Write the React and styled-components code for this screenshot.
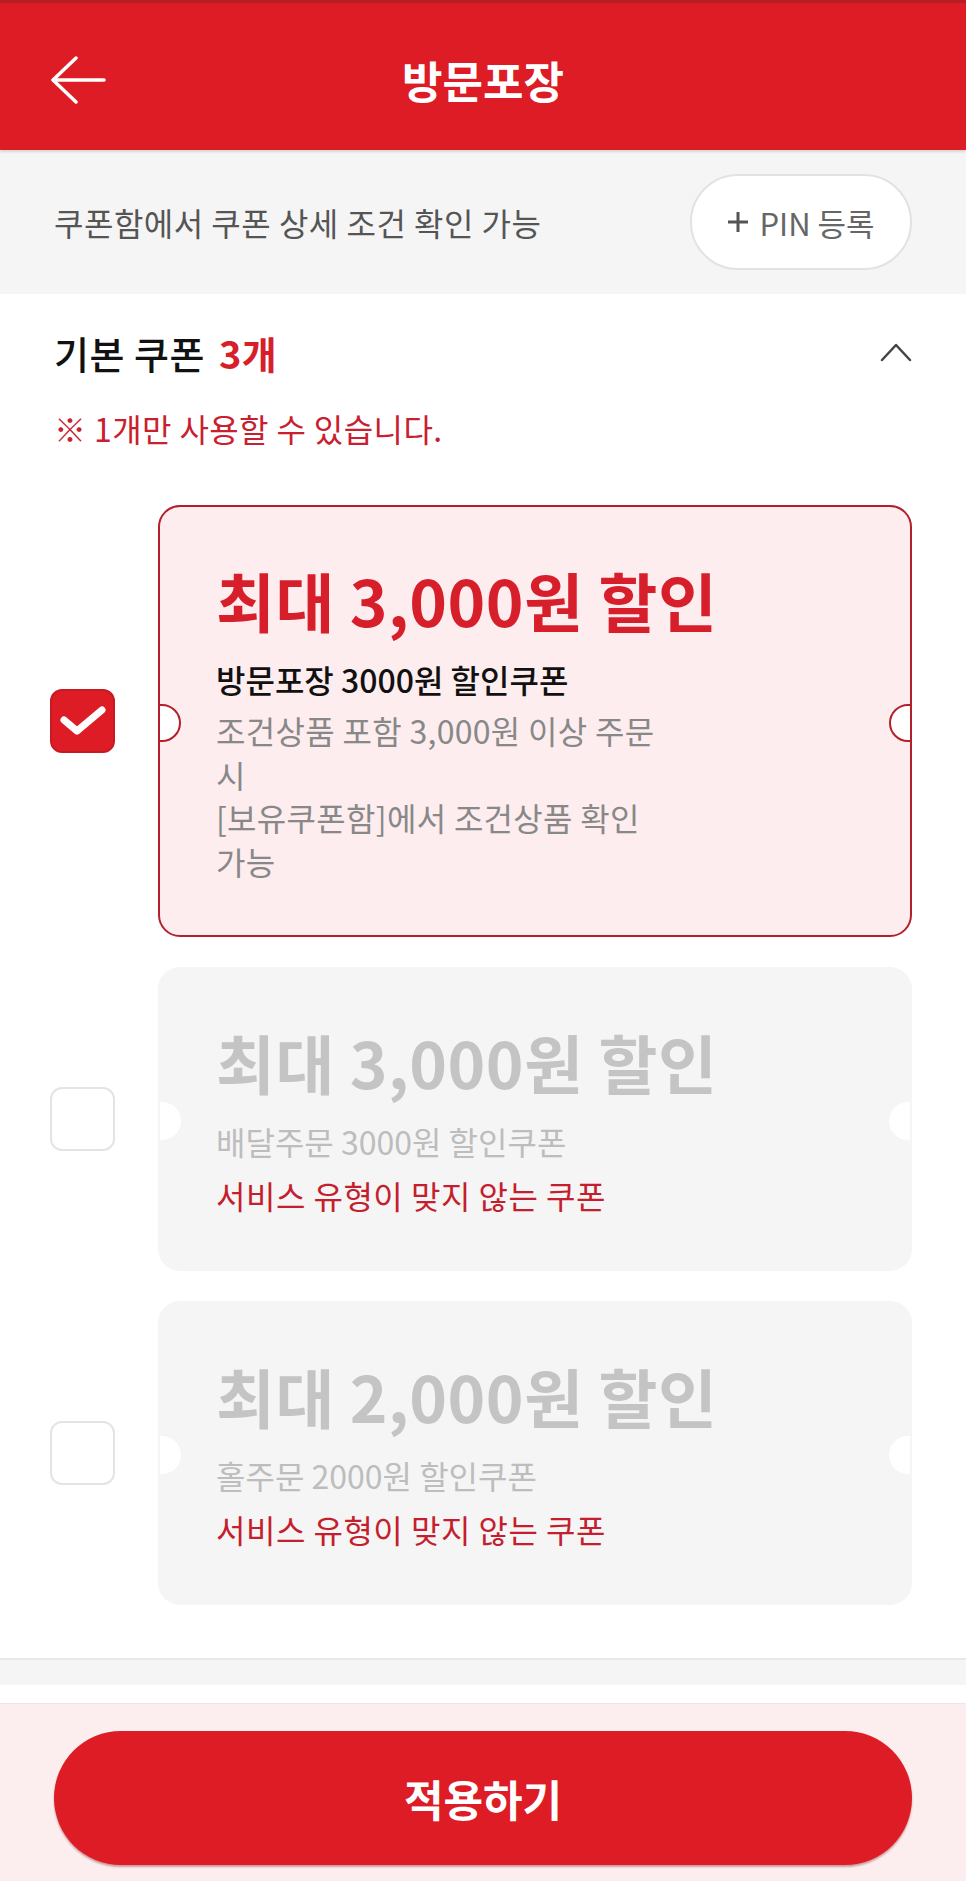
import React from 'react'
import styled, { createGlobalStyle, css } from 'styled-components'

const GlobalStyle = createGlobalStyle`
    * {
        box-sizing: border-box;
    }
    body {
        margin: 0;
        background: #ffffff;
        font-family: "Noto Sans CJK KR", "Noto Sans", sans-serif;
        color: #111;
    }
`

const Page = styled.div`
    width: 966px;
    display: flex;
    flex-direction: column;
`

const Header = styled.header`
    height: 150px;
    border-top: 3px solid #b81c25;
    padding: 6px 50px 0;
    background: #dd1c26;
    display: grid;
    grid-template-columns: 1fr auto 1fr;
    align-items: center;
    box-shadow: 0 2px 2px rgba(0, 0, 0, 0.12);
    position: relative;
    z-index: 1;
`

const BackButton = styled.button`
    width: 56px;
    height: 48px;
    padding: 0;
    border: none;
    background: transparent;
    display: flex;
    align-items: center;
    cursor: pointer;
`

const Title = styled.h1`
    margin: 0;
    font-size: 44px;
    font-weight: 700;
    color: #fff;
`

const InfoBar = styled.div`
    height: 144px;
    padding: 0 54px;
    background: #f5f5f5;
    display: flex;
    align-items: center;
    justify-content: space-between;
`

const InfoText = styled.p`
    margin: 0;
    font-size: 32px;
    color: #555;
    letter-spacing: 0.5px;
`

const PinButton = styled.button`
    width: 222px;
    height: 96px;
    border: 2px solid #e2e2e2;
    border-radius: 48px;
    background: #fff;
    display: flex;
    align-items: center;
    justify-content: center;
    gap: 10px;
    font-family: inherit;
    font-size: 31px;
    color: #666;
    cursor: pointer;
`

const Section = styled.section`
    padding: 28px 54px 53px 50px;
`

const SectionHead = styled.div`
    height: 60px;
    padding-left: 4px;
    display: flex;
    align-items: center;
    justify-content: space-between;
`

const SectionTitle = styled.h2`
    margin: 0;
    font-size: 38px;
    font-weight: 500;
    color: #111;
    letter-spacing: 0.5px;
`

const Count = styled.span`
    margin-left: 14px;
    color: #d71f2b;
    font-weight: 700;
`

const Note = styled.p`
    margin: 26px 0 0 4px;
    line-height: 40px;
    font-size: 32px;
    color: #c8202e;
    letter-spacing: 0.4px;
`

const CouponList = styled.ul`
    list-style: none;
    margin: 57px 0 0;
    padding: 0;
    display: flex;
    flex-direction: column;
    gap: 30px;
`

const CouponRow = styled.li`
    display: flex;
    align-items: center;
    gap: 43px;
`

const Checkbox = styled.span`
    flex: none;
    width: 65px;
    height: 64px;
    border-radius: 12px;
    display: flex;
    align-items: center;
    justify-content: center;
    ${({ $checked }) =>
        $checked
            ? css`
                  background: #dd1c26;
                  border: 2px solid #c81a23;
              `
            : css`
                  background: #fff;
                  border: 2.5px solid #e4e4e4;
              `}
`

const notch = css`
    content: '';
    position: absolute;
    top: 50%;
    width: 34px;
    height: 34px;
    margin-top: -17px;
    border-radius: 50%;
    background: #fff;
    border: 2px solid ${({ $selected }) => ($selected ? '#b3202a' : 'transparent')};
`

const Card = styled.div`
    flex: 1;
    position: relative;
    padding: 56px 56px 52px;
    border-radius: 22px;
    border: 2px solid ${({ $selected }) => ($selected ? '#b3202a' : 'transparent')};
    background: ${({ $selected }) => ($selected ? '#fdedef' : '#f5f5f5')};

    &::before {
        ${notch};
        left: -17px;
        clip-path: inset(0 0 0 calc(50% - 2px));
    }

    &::after {
        ${notch};
        right: -17px;
        clip-path: inset(0 calc(50% - 2px) 0 0);
    }
`

const CouponTitle = styled.h3`
    margin: 0;
    line-height: 72px;
    font-size: 64px;
    font-weight: 700;
    letter-spacing: 0.5px;
    color: ${({ $disabled }) => ($disabled ? '#c4c4c4' : '#d71f2b')};
`

const CouponName = styled.p`
    margin: 22px 0 0;
    line-height: 44px;
    font-size: 32px;
    font-weight: ${({ $disabled }) => ($disabled ? 400 : 500)};
    color: ${({ $disabled }) => ($disabled ? '#bdbdbd' : '#111')};
`

const Desc = styled.div`
    margin-top: 8px;
`

const DescLine = styled.p`
    margin: 0;
    line-height: 43.5px;
    font-size: 32px;
    color: #888;
    letter-spacing: 0.3px;
`

const Warning = styled.p`
    margin: 10px 0 0;
    line-height: 44px;
    font-size: 32px;
    color: #c41f2e;
    letter-spacing: 0.5px;
`

const Divider = styled.div`
    height: 27px;
    border-top: 2px solid #e8e8e8;
    background: #f5f5f5;
`

const Spacer = styled.div`
    height: 18px;
    background: #fff;
`

const BottomBar = styled.footer`
    height: 178px;
    padding: 27px 54px 0;
    border-top: 1px solid #f0e4e5;
    background: #fcedee;
`

const ApplyButton = styled.button`
    width: 100%;
    height: 134px;
    border: none;
    border-radius: 67px;
    background: #dd1c26;
    box-shadow: 0 2px 2px rgba(120, 0, 0, 0.35);
    font-family: inherit;
    font-size: 43px;
    font-weight: 700;
    color: #fff;
    cursor: pointer;
`

const coupons = [
    {
        id: 1,
        selected: true,
        title: '최대 3,000원 할인',
        name: '방문포장 3000원 할인쿠폰',
        lines: ['조건상품 포함 3,000원 이상 주문', '시', '[보유쿠폰함]에서 조건상품 확인', '가능'],
    },
    {
        id: 2,
        disabled: true,
        title: '최대 3,000원 할인',
        name: '배달주문 3000원 할인쿠폰',
        warning: '서비스 유형이 맞지 않는 쿠폰',
    },
    {
        id: 3,
        disabled: true,
        title: '최대 2,000원 할인',
        name: '홀주문 2000원 할인쿠폰',
        warning: '서비스 유형이 맞지 않는 쿠폰',
    },
]

const ArrowLeft = () => (
    <svg width="56" height="48" viewBox="0 0 56 48" fill="none">
        <path d="M54 24H4" stroke="#fff" strokeWidth="3.5" strokeLinecap="round" />
        <path d="M26 2L3 24L26 46" stroke="#fff" strokeWidth="3.5" strokeLinecap="round" strokeLinejoin="round" />
    </svg>
)

const ChevronUp = () => (
    <svg width="32" height="20" viewBox="0 0 32 20" fill="none">
        <path d="M2 18L16 3L30 18" stroke="#444" strokeWidth="2.5" strokeLinecap="round" strokeLinejoin="round" />
    </svg>
)

const PlusIcon = () => (
    <svg width="22" height="22" viewBox="0 0 22 22" fill="none">
        <path d="M11 1V21M1 11H21" stroke="#555" strokeWidth="3" />
    </svg>
)

const CheckIcon = () => (
    <svg width="48" height="32" viewBox="0 0 48 32" fill="none">
        <path d="M5 15L18 26L43 5" stroke="#fff" strokeWidth="7" strokeLinecap="round" strokeLinejoin="round" />
    </svg>
)

const Coupon = ({ item }) => (
    <CouponRow>
        <Checkbox $checked={item.selected}>{item.selected && <CheckIcon />}</Checkbox>
        <Card $selected={item.selected}>
            <CouponTitle $disabled={item.disabled}>{item.title}</CouponTitle>
            <CouponName $disabled={item.disabled}>{item.name}</CouponName>
            {item.lines && (
                <Desc>
                    {item.lines.map((line) => (
                        <DescLine key={line}>{line}</DescLine>
                    ))}
                </Desc>
            )}
            {item.warning && <Warning>{item.warning}</Warning>}
        </Card>
    </CouponRow>
)

const App = () => {
    return (
        <Page>
            <GlobalStyle />
            <Header>
                <BackButton aria-label="뒤로">
                    <ArrowLeft />
                </BackButton>
                <Title>방문포장</Title>
                <span />
            </Header>

            <InfoBar>
                <InfoText>쿠폰함에서 쿠폰 상세 조건 확인 가능</InfoText>
                <PinButton>
                    <PlusIcon />
                    PIN 등록
                </PinButton>
            </InfoBar>

            <Section>
                <SectionHead>
                    <SectionTitle>
                        기본 쿠폰<Count>3개</Count>
                    </SectionTitle>
                    <ChevronUp />
                </SectionHead>
                <Note>※ 1개만 사용할 수 있습니다.</Note>

                <CouponList>
                    {coupons.map((item) => (
                        <Coupon key={item.id} item={item} />
                    ))}
                </CouponList>
            </Section>

            <Divider />
            <Spacer />

            <BottomBar>
                <ApplyButton>적용하기</ApplyButton>
            </BottomBar>
        </Page>
    )
}

export default App
